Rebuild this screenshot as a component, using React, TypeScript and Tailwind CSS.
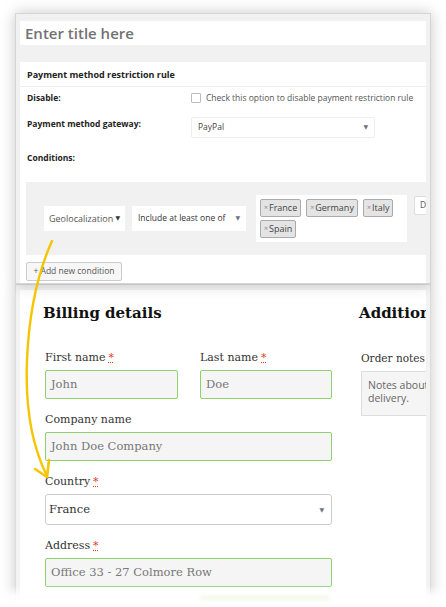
import React from "react";

const adminFont = { fontFamily: '"Open Sans", "DejaVu Sans", sans-serif' };
const shopFont = { fontFamily: '"DejaVu Serif", "Liberation Serif", serif' };

function Caret({ className = "" }: { className?: string }) {
  return <span className={`text-[6px] text-gray-500 ${className}`}>▼</span>;
}

function Tag({ label }: { label: string }) {
  return (
    <span className="flex h-[18px] items-center rounded-[2px] border border-[#aaa] bg-[#e4e4e4] px-[3px] text-[9px] text-[#444]">
      <span className="mr-[1px] text-[7px] text-[#888]">×</span>
      {label}
    </span>
  );
}

function Req() {
  return (
    <span className="ml-[3px] text-[#e2401c] underline decoration-dotted decoration-[#e2401c]">*</span>
  );
}

function Field({
  label,
  value,
  required,
  className = "",
}: {
  label: string;
  value: string;
  required?: boolean;
  className?: string;
}) {
  return (
    <div className={className}>
      <div className="mb-1 h-4 text-[11px] leading-4 text-[#333]">
        {label}
        {required && <Req />}
      </div>
      <div className="flex h-[29px] items-center rounded-[2px] border border-[#8fd16b] bg-[#f5f5f5] px-[5px] text-[11.5px] text-[#777]">
        {value}
      </div>
    </div>
  );
}

export default function App() {
  return (
    <div className="relative h-[607px] w-[446px] overflow-hidden bg-white">
      <div className="flex flex-col px-[15px] pt-[13px]">
        {/* Admin rule panel */}
        <section
          style={adminFont}
          className="relative z-10 flex h-[271px] flex-col border border-[#d5d5d5] bg-[#f1f1f1] px-[4px] pt-[7px] shadow-[0_0_14px_rgba(0,0,0,0.22)]"
        >
          <div className="flex h-[24px] items-center bg-white px-[5px] text-[15px] font-semibold text-[#727272]">
            Enter title here
          </div>
          <div className="mt-[17px] flex flex-1 flex-col overflow-hidden bg-white">
            <div className="flex h-[25px] items-center border-b border-[#eee] px-[7px] pt-[1px] text-[9px] font-bold text-[#222]">
              Payment method restriction rule
            </div>
            <div className="flex h-[22px] items-center px-[7px] text-[8.5px]">
              <span className="w-[164px] font-bold text-[#222]">Disable:</span>
              <span className="mr-[5px] h-[10px] w-[10px] rounded-[1px] border border-[#bbb] bg-white" />
              <span className="text-[8.5px] text-[#555]">Check this option to disable payment restriction rule</span>
            </div>
            <div className="flex h-[38px] items-start px-[7px] pt-[8px] text-[8.5px]">
              <span className="mt-[1px] w-[164px] font-bold text-[#222]">Payment method gateway:</span>
              <div className="flex h-[21px] w-[184px] items-center justify-between rounded-[2px] border border-[#eee] bg-white px-[6px] text-[#444]">
                PayPal
                <Caret />
              </div>
            </div>
            <div className="flex h-[22px] items-center px-[7px] text-[8.5px] font-bold text-[#222]">
              Conditions:
            </div>
            <div className="ml-[6px] mt-[13px] flex h-[73px] w-[420px] shrink-0 items-center bg-[#f1f1f1] pl-[18px]">
              <div className="flex h-[25px] w-[81px] items-center justify-between bg-white px-[5px] text-[9px] text-[#555]">
                Geolocalization
                <span className="text-[6px] text-[#333]">▼</span>
              </div>
              <div className="ml-[7px] flex h-[25px] w-[114px] items-center justify-between bg-white px-[6px] text-[8.5px] text-[#333]">
                Include at least one of
                <Caret />
              </div>
              <div className="ml-[10px] flex h-[47px] w-[151px] flex-wrap content-start gap-x-[5px] gap-y-[3px] bg-white px-[4px] pt-[4px]">
                <Tag label="France" />
                <Tag label="Germany" />
                <Tag label="Italy" />
                <Tag label="Spain" />
              </div>
              <div className="ml-[7px] mb-[26px] flex h-[19px] w-[30px] items-center rounded-[2px] border border-[#ddd] bg-white px-[5px] text-[8.5px] text-[#555]">
                De
              </div>
            </div>
            <div className="ml-[6px] mt-[7px] flex h-[19px] w-[96px] shrink-0 items-center justify-center rounded-[2px] border border-[#ccc] bg-[#f7f7f7] text-[8.5px] text-[#555]">
              + Add new condition
            </div>
          </div>
        </section>

        {/* Checkout panel */}
        <section
          style={shopFont}
          className="relative flex h-[340px] border border-[#dcdcdc] bg-[#f3f3f3] px-[4px] pt-[5px] shadow-[0_0_14px_rgba(0,0,0,0.22)]"
        >
          <div className="flex flex-1 overflow-hidden bg-white pt-[14px]">
            <div className="w-[312px] shrink-0 pl-[23px]">
              <h2 className="h-[19px] text-[15px] font-bold leading-[19px] text-[#111]">Billing details</h2>
              <div className="ml-[2px] mt-[27px] flex w-[287px] flex-col gap-[13px]">
                <div className="flex gap-[22px]">
                  <Field label="First name" value="John" required className="w-[133px]" />
                  <Field label="Last name" value="Doe" required className="w-[132px]" />
                </div>
                <Field label="Company name" value="John Doe Company" />
                <div>
                  <div className="mb-1 h-4 text-[11px] leading-4 text-[#333]">
                    Country
                    <Req />
                  </div>
                  <div className="flex h-[31px] items-center justify-between rounded-[3px] border border-[#ccc] bg-white pl-[3px] pr-[7px] text-[11.5px] text-[#333]">
                    France
                    <Caret />
                  </div>
                </div>
                <Field label="Address" value="Office 33 - 27 Colmore Row" required />
              </div>
            </div>
            <div className="shrink-0 pl-[27px]">
              <h2 className="h-[19px] whitespace-nowrap text-[15px] font-bold leading-[19px] text-[#111]">
                Additional information
              </h2>
              <div className="ml-[2px] mt-[27px] h-4 whitespace-nowrap text-[10.5px] leading-4 text-[#333]">Order notes</div>
              <div
                style={adminFont}
                className="ml-[2px] mt-[5px] h-[45px] w-[260px] border border-[#ddd] bg-[#f5f5f5] px-[6px] pt-[7px] text-[10.5px] leading-[13px] text-[#666]"
              >
                <div className="whitespace-nowrap">Notes about your order, e.g. special notes for</div>
                <div>delivery.</div>
              </div>
            </div>
          </div>
        </section>
      </div>

      {/* bottom fade */}
      <div className="pointer-events-none absolute inset-x-0 bottom-0 z-20 h-[22px] bg-gradient-to-b from-white/0 via-white/90 to-white" />
      <div className="pointer-events-none absolute bottom-[8px] left-[200px] z-20 h-[2px] w-[130px] rounded-full bg-[#c9ecb0]/60 blur-[2px]" />

      {/* yellow arrow */}
      <svg className="pointer-events-none absolute left-0 top-0 z-30" width="446" height="607" viewBox="0 0 446 607" fill="none">
        <path d="M52 241 Q30 290 27 360 T47 476" stroke="#f6c400" strokeWidth="2.4" strokeLinecap="round" />
        <path d="M35 469 L47 477 L49 460" stroke="#f6c400" strokeWidth="2.6" strokeLinecap="round" strokeLinejoin="round" />
      </svg>
    </div>
  );
}
